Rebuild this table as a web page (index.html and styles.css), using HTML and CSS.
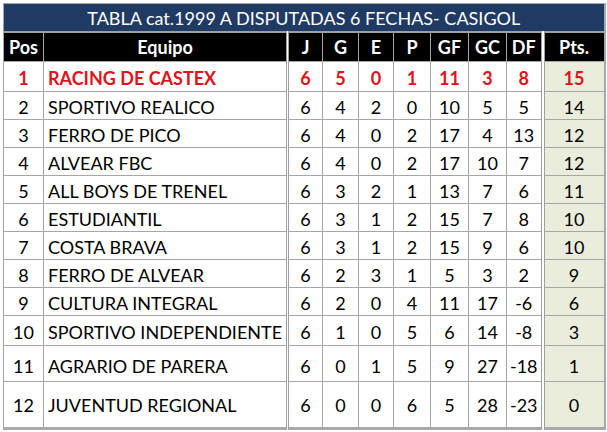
FILE: index.html
```html
<!DOCTYPE html>
<html lang="es">
<head>
<meta charset="utf-8">
<title>Tabla</title>
<link rel="stylesheet" href="styles.css">
</head>
<body>
<div class="sheet">
<table class="tabla">
<colgroup>
<col class="c-pos"><col class="c-eq"><col class="c-j"><col class="c-g"><col class="c-e"><col class="c-p"><col class="c-gf"><col class="c-gc"><col class="c-df"><col class="c-pts">
</colgroup>
<thead>
<tr class="title"><th colspan="10">TABLA cat.1999 A DISPUTADAS 6 FECHAS- CASIGOL</th></tr>
<tr class="head"><th>Pos</th><th>Equipo</th><th class="dl">J</th><th>G</th><th>E</th><th>P</th><th>GF</th><th>GC</th><th>DF</th><th class="pts">Pts.</th></tr>
</thead>
<tbody>
<tr class="leader r1"><td>1</td><td class="eq">RACING DE CASTEX</td><td class="dl">6</td><td>5</td><td>0</td><td>1</td><td>11</td><td>3</td><td>8</td><td class="pts">15</td></tr>
<tr class="r"><td>2</td><td class="eq">SPORTIVO REALICO</td><td class="dl">6</td><td>4</td><td>2</td><td>0</td><td>10</td><td>5</td><td>5</td><td class="pts">14</td></tr>
<tr class="r"><td>3</td><td class="eq">FERRO DE PICO</td><td class="dl">6</td><td>4</td><td>0</td><td>2</td><td>17</td><td>4</td><td>13</td><td class="pts">12</td></tr>
<tr class="r"><td>4</td><td class="eq">ALVEAR FBC</td><td class="dl">6</td><td>4</td><td>0</td><td>2</td><td>17</td><td>10</td><td>7</td><td class="pts">12</td></tr>
<tr class="r"><td>5</td><td class="eq">ALL BOYS DE TRENEL</td><td class="dl">6</td><td>3</td><td>2</td><td>1</td><td>13</td><td>7</td><td>6</td><td class="pts">11</td></tr>
<tr class="r"><td>6</td><td class="eq">ESTUDIANTIL</td><td class="dl">6</td><td>3</td><td>1</td><td>2</td><td>15</td><td>7</td><td>8</td><td class="pts">10</td></tr>
<tr class="r"><td>7</td><td class="eq">COSTA BRAVA</td><td class="dl">6</td><td>3</td><td>1</td><td>2</td><td>15</td><td>9</td><td>6</td><td class="pts">10</td></tr>
<tr class="r"><td>8</td><td class="eq">FERRO DE ALVEAR</td><td class="dl">6</td><td>2</td><td>3</td><td>1</td><td>5</td><td>3</td><td>2</td><td class="pts">9</td></tr>
<tr class="r"><td>9</td><td class="eq">CULTURA INTEGRAL</td><td class="dl">6</td><td>2</td><td>0</td><td>4</td><td>11</td><td>17</td><td>-6</td><td class="pts">6</td></tr>
<tr class="r10"><td>10</td><td class="eq">SPORTIVO INDEPENDIENTE</td><td class="dl">6</td><td>1</td><td>0</td><td>5</td><td>6</td><td>14</td><td>-8</td><td class="pts">3</td></tr>
<tr class="r11"><td>11</td><td class="eq">AGRARIO DE PARERA</td><td class="dl">6</td><td>0</td><td>1</td><td>5</td><td>9</td><td>27</td><td>-18</td><td class="pts">1</td></tr>
<tr class="r12"><td>12</td><td class="eq">JUVENTUD REGIONAL</td><td class="dl">6</td><td>0</td><td>0</td><td>6</td><td>5</td><td>28</td><td>-23</td><td class="pts">0</td></tr>
</tbody>
</table>
</div>
</body>
</html>
```
FILE: styles.css
```css
html, body {
  margin: 0;
  padding: 0;
  background: #ffffff;
}
.sheet {
  padding: 3px 0 0 3px;
  width: 607px;
  height: 432px;
  box-sizing: border-box;
}
.tabla {
  border-collapse: collapse;
  table-layout: fixed;
  width: 601px;
  font-family: Lato, "Liberation Sans", sans-serif;
  font-size: 18px;
  color: #000;
  border-left: 1px solid #a0a0a0;
  border-right: 2px solid #a8a8a8;
  border-bottom: 3px solid #a8a8a8;
}
.c-pos { width: 40px; }
.c-eq { width: 244px; }
.c-j { width: 35px; }
.c-g { width: 36px; }
.c-e { width: 35px; }
.c-p { width: 37px; }
.c-gf { width: 38px; }
.c-gc { width: 38px; }
.c-df { width: 36px; }
.c-pts { width: 62px; }

.tabla th, .tabla td {
  border: 1px solid #a6a6a6;
  padding: 0;
  text-align: center;
  vertical-align: middle;
  white-space: nowrap;
  overflow: hidden;
}
.title th {
  background: #1f3a63;
  color: #ffffff;
  font-weight: normal;
  height: 27px;
  border-bottom: 2px solid #a0a0a0;
}
.head th {
  background: #000000;
  color: #ffffff;
  font-weight: bold;
  height: 28px;
}
.tabla td.eq {
  text-align: left;
  padding-left: 4px;
}
.tabla .dl {
  border-left: 3px double #a0a0a0;
}
.tabla .pts {
  border-left: 4px double #a0a0a0;
}
.tabla td.pts {
  background: #eaeddc;
}
.leader td {
  color: #e0121b;
  font-weight: bold;
}
.r1 td { height: 27px; padding-top: 2px; }
.r td { height: 25px; padding-top: 2px; }
.r10 td { height: 27px; padding-top: 2px; }
.r11 td { height: 31px; padding-top: 4px; }
.r12 td { height: 45px; }
```
